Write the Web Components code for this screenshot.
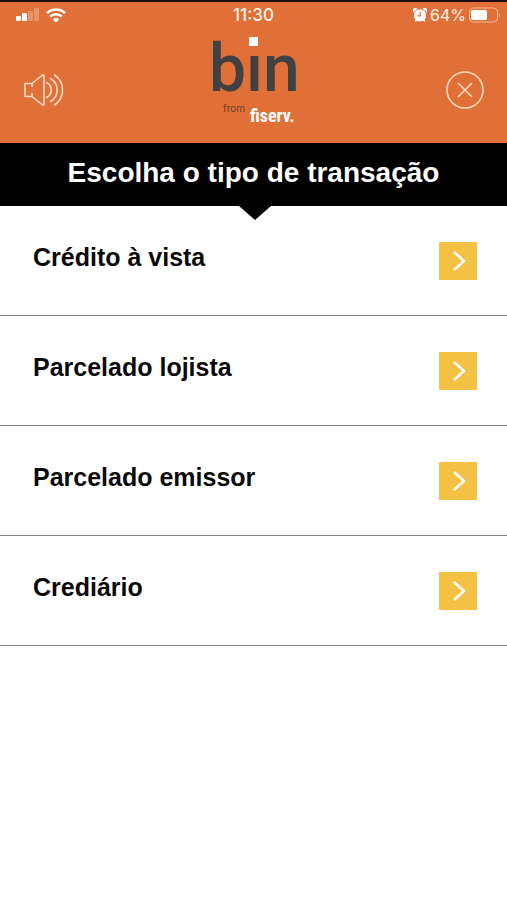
<!DOCTYPE html>
<html lang="pt-BR">
<head>
<meta charset="utf-8">
<meta name="viewport" content="width=device-width, initial-scale=1">
<title>Tipo de transação</title>
<style>
  body { margin: 0; background: #fff; font-family: "Liberation Sans", Arial, sans-serif; }
</style>
</head>
<body>
<transaction-screen></transaction-screen>

<script>
const define = (name, html) => customElements.define(name, class extends HTMLElement {
  constructor() {
    super();
    this.attachShadow({ mode: "open" }).innerHTML = html;
  }
});

define("status-bar", `
  <style>
    :host { display: grid; grid-template-columns: 1fr auto 1fr; align-items: center; height: 26px;
      padding: 0 6px; color: #fff3e8; font: 500 17px/26px Inter, sans-serif; }
    div { display: flex; align-items: center; gap: 6px; }
    .left { padding-left: 10px; }
    .right { justify-content: flex-end; gap: 3px; font-size: 16px; font-weight: 400; }
    svg { display: block; }
  </style>
  <div class="left">
    <svg width="24" height="14" viewBox="0 0 24 14" fill="#fff" aria-hidden="true">
      <rect x="0" y="8" width="5" height="5" rx="1"/><rect x="6" y="5" width="5" height="8" rx="1"/>
      <g opacity=".25"><rect x="12" y="3" width="5" height="10" rx="1"/><rect x="18" y="0" width="5" height="13" rx="1"/></g>
    </svg>
    <svg width="20" height="15" viewBox="0 0 20 15" fill="none" stroke="#fff" stroke-width="2.5" aria-hidden="true">
      <path d="M.9 5.2a13 13 0 0 1 18.2 0M4.1 8.6a8.4 8.4 0 0 1 11.8 0"/>
      <path d="M10 14.5 6.8 11.4a4.6 4.6 0 0 1 6.4 0z" fill="#fff" stroke="none"/>
    </svg>
  </div>
  <span>11:30</span>
  <div class="right">
    <svg width="14" height="14" viewBox="0 0 14 14" aria-hidden="true">
      <g fill="#fff"><circle cx="7" cy="7.4" r="6.100"/><path d="M.2 4.600A3 3 0 0 1 4.500.5zM13.800 4.600A3 3 0 0 0 9.500.5zM1.600 14l1.400-3.400 2.400 1.700zM12.400 14 11 10.600l-2.400 1.700z"/></g>
      <path d="M7.300 4v3.800H4.500" fill="none" stroke="#e17038" stroke-width="1.200"/>
    </svg>
    <span>64%</span>
    <svg width="32" height="16" viewBox="0 0 32 16" aria-hidden="true">
      <rect x=".5" y="1" width="28" height="14" rx="4" fill="none" stroke="#f3b998"/>
      <rect x="2" y="3" width="16" height="10" rx="2" fill="#fff"/>
      <path d="M30 5.500q2 2.500 0 5z" fill="#f3b998"/>
    </svg>
  </div>`);

define("brand-logo", `
  <style>
    :host { display: block; }
    svg { display: block; overflow: visible; }
  </style>
  <svg width="92" height="90" viewBox="-2 0 92 90" role="img" aria-label="bin from fiserv.">
    <text x="-1" y="56" font-family="Roboto, sans-serif" font-weight="500" font-size="66" fill="#414042">bin</text>
    <rect x="37" y="0" width="13" height="16" fill="#e17038"/>
    <rect x="39" y="2" width="9" height="9" fill="#fff"/>
    <text x="13" y="77" font-family="Inter, sans-serif" font-size="10" fill="#6f3d28">from</text>
    <text x="40" y="87" font-family="Roboto Condensed, Roboto, sans-serif" font-weight="700" font-size="18" fill="#fff">fiserv.</text>
  </svg>`);

define("icon-button", `
  <style>
    :host { display: block; }
    button { display: block; padding: 0; border: 0; background: none; color: #ffdcc0; cursor: pointer; }
    ::slotted(svg) { display: block; }
  </style>
  <button type="button"><slot></slot></button>`);

define("app-header", `
  <style>
    :host { display: block; height: 141px; border-top: 2px solid #1d0d05; background: #e17038; }
    .bar { display: grid; grid-template-columns: 1fr auto 1fr; align-items: start; padding: 7px 22px 0 23px; }
    icon-button { margin-top: 36px; }
    icon-button:last-child { justify-self: end; }
  </style>
  <status-bar></status-bar>
  <div class="bar">
    <icon-button>
      <svg width="44" height="38" viewBox="0 0 44 38" fill="none" stroke="currentColor" stroke-width="1.600" stroke-linejoin="round" stroke-linecap="round" role="img" aria-label="Áudio">
        <path d="M9 12.500H2v13h7M9 12.500v3M9 25.500v-3M9 12.500 19.500 4q1.500-.8 1.500 1v28q0 1.800-1.500 1L9 25.500"/>
        <path d="M23.500 11.500a8.300 8.300 0 0 1 0 15M27.500 7.500a13.300 13.300 0 0 1 0 23M31.500 4a18 18 0 0 1 0 30"/>
      </svg>
    </icon-button>
    <brand-logo></brand-logo>
    <icon-button>
      <svg width="40" height="38" viewBox="0 0 40 38" fill="none" stroke="currentColor" stroke-width="1.600" role="img" aria-label="Fechar">
        <circle cx="20" cy="19" r="18"/><path d="m13 12 14 14M27 12 13 26"/>
      </svg>
    </icon-button>
  </div>`);

define("section-title", `
  <style>
    :host { display: block; position: relative; z-index: 1; height: 63px; background: #000; color: #fff; text-align: center; }
    :host::after { content: ""; position: absolute; top: 100%; left: 50%; margin-left: -15px;
      border: 16px solid transparent; border-top: 14px solid #000; border-bottom: 0; }
    h1 { margin: 0; padding-top: 14px; font-size: 28px; line-height: 32px; font-weight: 700; }
  </style>
  <h1><slot></slot></h1>`);

define("option-row", `
  <style>
    :host { display: block; border-bottom: 1px solid #858585; }
    button { display: flex; justify-content: space-between; align-items: flex-start; width: 100%; height: 109px;
      padding: 36px 30px 0 33px; border: 0; background: #fff; color: #0a0a0a; text-align: left;
      font: 700 25px/30px "Liberation Sans", Arial, sans-serif; cursor: pointer; }
    svg { display: block; flex: none; background: #f4c144; }
  </style>
  <button type="button">
    <slot></slot>
    <svg width="38" height="38" viewBox="0 0 38 38" fill="none" stroke="#fff" stroke-width="2.500" aria-hidden="true">
      <path d="m15 10 10 9-10 9"/>
    </svg>
  </button>`);

define("transaction-screen", `
  <style>
    :host { display: block; }
  </style>
  <app-header></app-header>
  <main>
    <section-title>Escolha o tipo de transação</section-title>
    <option-row>Crédito à vista</option-row>
    <option-row>Parcelado lojista</option-row>
    <option-row>Parcelado emissor</option-row>
    <option-row>Crediário</option-row>
  </main>`);
</script>
</body>
</html>
